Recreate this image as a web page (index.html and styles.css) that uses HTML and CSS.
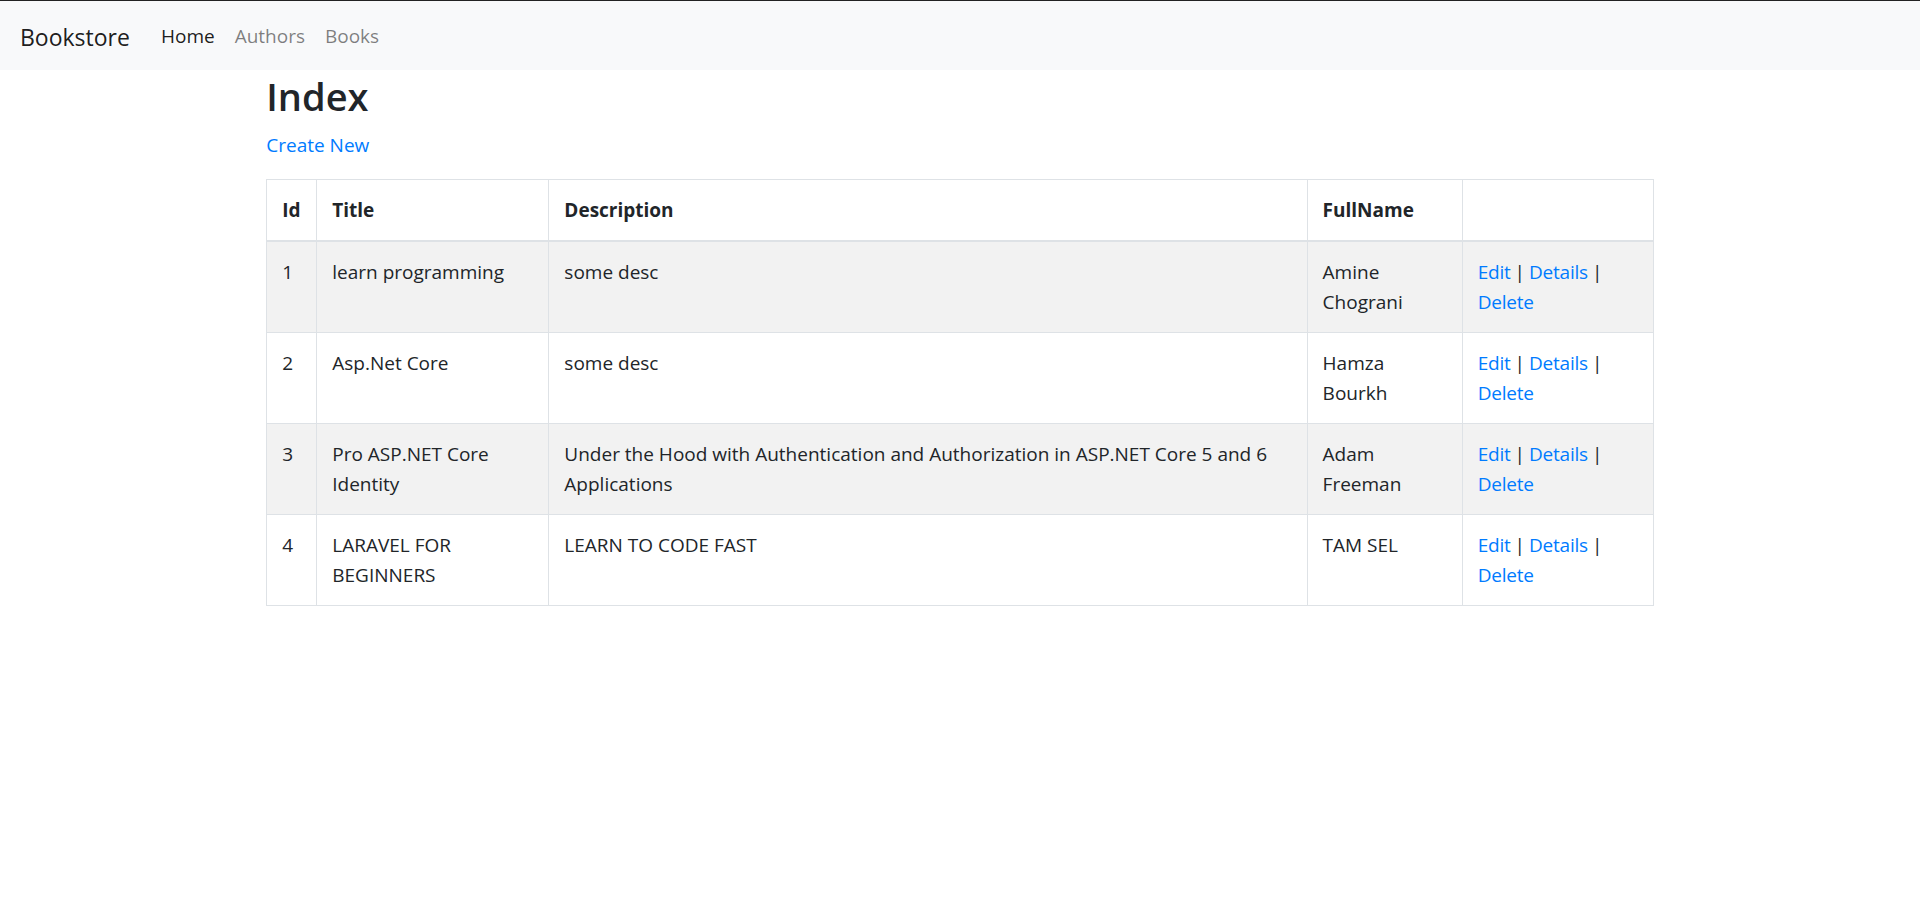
FILE: index.html
```html
<!DOCTYPE html>
<html lang="en">
<head>
<meta charset="utf-8">
<title>Index - Bookstore</title>
<link rel="stylesheet" href="styles.css">
</head>
<body>
<header>
  <nav class="navbar">
    <a class="brand" href="#">Bookstore</a>
    <ul class="nav">
      <li><a class="nav-link active" href="#">Home</a></li>
      <li><a class="nav-link" href="#">Authors</a></li>
      <li><a class="nav-link" href="#">Books</a></li>
    </ul>
  </nav>
</header>
<main class="container">
  <h1 class="title">Index</h1>
  <p class="create"><a href="#">Create New</a></p>
  <table class="table">
    <thead>
      <tr>
        <th class="col-id">Id</th>
        <th class="col-title">Title</th>
        <th class="col-desc">Description</th>
        <th class="col-name">FullName</th>
        <th class="col-act"></th>
      </tr>
    </thead>
    <tbody>
      <tr>
        <td>1</td>
        <td>learn programming</td>
        <td>some desc</td>
        <td>Amine Chograni</td>
        <td class="actions"><a href="#">Edit</a> | <a href="#">Details</a> | <a href="#">Delete</a></td>
      </tr>
      <tr>
        <td>2</td>
        <td>Asp.Net Core</td>
        <td>some desc</td>
        <td>Hamza Bourkh</td>
        <td class="actions"><a href="#">Edit</a> | <a href="#">Details</a> | <a href="#">Delete</a></td>
      </tr>
      <tr>
        <td>3</td>
        <td>Pro ASP.NET Core Identity</td>
        <td>Under the Hood with Authentication and Authorization in ASP.NET Core 5 and 6 Applications</td>
        <td>Adam Freeman</td>
        <td class="actions"><a href="#">Edit</a> | <a href="#">Details</a> | <a href="#">Delete</a></td>
      </tr>
      <tr>
        <td>4</td>
        <td>LARAVEL FOR BEGINNERS</td>
        <td>LEARN TO CODE FAST</td>
        <td>TAM SEL</td>
        <td class="actions"><a href="#">Edit</a> | <a href="#">Details</a> | <a href="#">Delete</a></td>
      </tr>
    </tbody>
  </table>
</main>
</body>
</html>
```
FILE: styles.css
```css
* {
  box-sizing: border-box;
}

html, body {
  margin: 0;
  padding: 0;
  background: #fff;
}

body {
  font-family: "Open Sans", "Noto Sans", "Liberation Sans", sans-serif;
  font-size: 19px;
  line-height: 30px;
  color: #212529;
  border-top: 1px solid #222;
}

a {
  color: #007bff;
  text-decoration: none;
}

.navbar {
  display: flex;
  align-items: center;
  height: 69px;
  padding: 0 20px;
  background: #f8f9fa;
}

.brand {
  font-size: 23px;
  line-height: 36px;
  color: rgba(0, 0, 0, 0.9);
  margin-right: 21px;
  padding-top: 3px;
}

.nav {
  display: flex;
  list-style: none;
  margin: 0;
  padding: 0;
}

.nav-link {
  display: block;
  padding: 0 10px;
  font-size: 19px;
  line-height: 30px;
  color: rgba(0, 0, 0, 0.5);
}

.nav-link.active {
  color: rgba(0, 0, 0, 0.9);
}

.container {
  max-width: 1425px;
  margin: 0 auto;
  padding: 0 18.75px;
}

.title {
  margin: 2px 0 10px;
  font-size: 38px;
  line-height: 48px;
  font-weight: 600;
}

.create {
  margin: 0 0 19px;
}

.table {
  width: 100%;
  table-layout: fixed;
  border-collapse: collapse;
  border: 1px solid #dee2e6;
  color: #212529;
}

.table th,
.table td {
  padding: 15px;
  border: 1px solid #dee2e6;
  text-align: left;
}

.table th {
  font-weight: 700;
  vertical-align: bottom;
  border-bottom: 2px solid #dee2e6;
}

.table td {
  vertical-align: top;
}

.table tbody tr:nth-child(odd) {
  background: #f2f2f2;
}

.actions {
  word-spacing: -1px;
}

.actions a {
  letter-spacing: -0.2px;
}

.col-id { width: 50px; }
.col-title { width: 232px; }
.col-desc { width: 758px; }
.col-name { width: 155px; }
.col-act { width: 191px; }
```
